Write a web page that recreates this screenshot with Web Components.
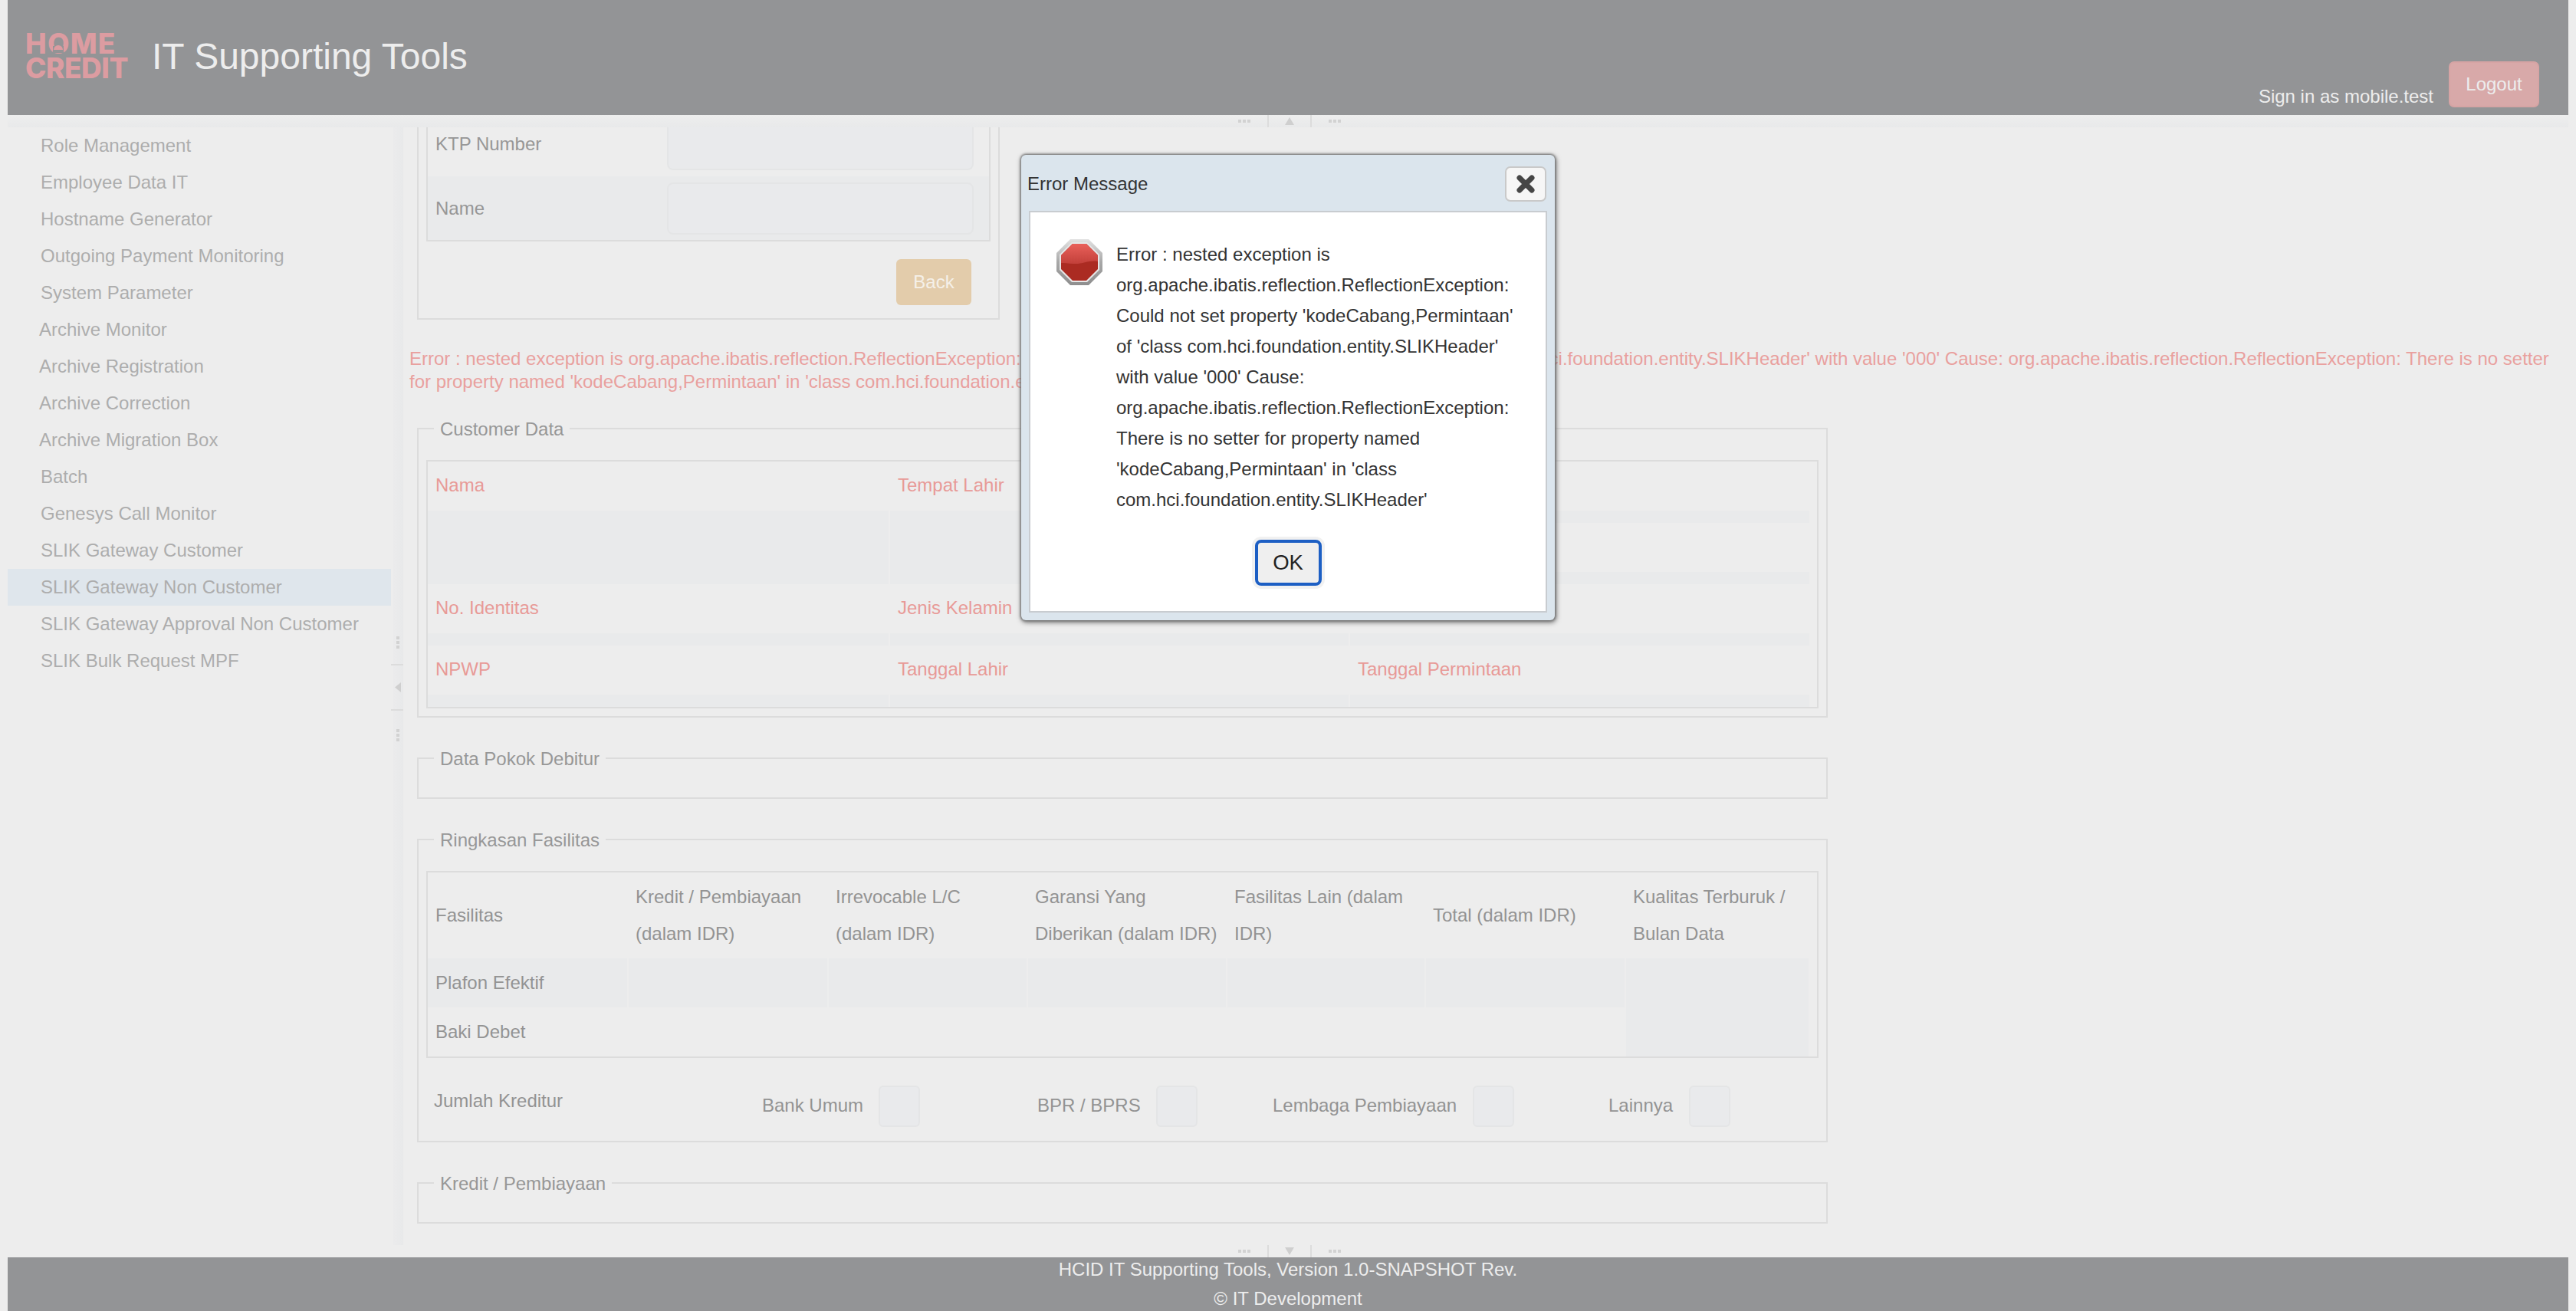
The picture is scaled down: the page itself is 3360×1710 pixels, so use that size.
<!DOCTYPE html>
<html>
<head>
<meta charset="utf-8">
<title>IT Supporting Tools</title>
<style>
    html, body { margin: 0; height: 100%; overflow: hidden; background: #ededed; }
    body { font: 24px "Liberation Sans", Arial, sans-serif; color: #979797; }
</style>
</head>
<body>
<it-app>
    <it-header slot="header" user="mobile.test"></it-header>
    <it-resizer slot="north" dir="up"></it-resizer>
    <it-sidebar slot="side">
        <it-nav-item>Role Management</it-nav-item>
        <it-nav-item>Employee Data IT</it-nav-item>
        <it-nav-item>Hostname Generator</it-nav-item>
        <it-nav-item>Outgoing Payment Monitoring</it-nav-item>
        <it-nav-item>System Parameter</it-nav-item>
        <it-nav-item outdent>Archive Monitor</it-nav-item>
        <it-nav-item outdent>Archive Registration</it-nav-item>
        <it-nav-item outdent>Archive Correction</it-nav-item>
        <it-nav-item outdent>Archive Migration Box</it-nav-item>
        <it-nav-item>Batch</it-nav-item>
        <it-nav-item>Genesys Call Monitor</it-nav-item>
        <it-nav-item>SLIK Gateway Customer</it-nav-item>
        <it-nav-item active>SLIK Gateway Non Customer</it-nav-item>
        <it-nav-item>SLIK Gateway Approval Non Customer</it-nav-item>
        <it-nav-item>SLIK Bulk Request MPF</it-nav-item>
    </it-sidebar>
    <it-resizer slot="west" dir="left"></it-resizer>
    <it-main slot="main">
        <it-search-form></it-search-form>
        <it-error-text>Error : nested exception is org.apache.ibatis.reflection.ReflectionException: Could not set property 'kodeCabang,Permintaan' of 'class com.hci.foundation.entity.SLIKHeader' with value '000' Cause: org.apache.ibatis.reflection.ReflectionException: There is no setter for property named 'kodeCabang,Permintaan' in 'class com.hci.foundation.entity.SLIKHeader'</it-error-text>
        <it-fieldset legend="Customer Data" style="margin-top:30px">
            <it-customer-table></it-customer-table>
        </it-fieldset>
        <it-fieldset legend="Data Pokok Debitur"></it-fieldset>
        <it-fieldset legend="Ringkasan Fasilitas">
            <it-facility-table></it-facility-table>
            <it-creditor-row></it-creditor-row>
        </it-fieldset>
        <it-fieldset legend="Kredit / Pembiayaan"></it-fieldset>
    </it-main>
    <it-resizer slot="south" dir="down"></it-resizer>
    <it-footer slot="footer"></it-footer>
</it-app>
<it-dialog heading="Error Message">Error : nested exception is org.apache.ibatis.reflection.ReflectionException: Could not set property 'kodeCabang,Permintaan' of 'class com.hci.foundation.entity.SLIKHeader' with value '000' Cause: org.apache.ibatis.reflection.ReflectionException: There is no setter for property named 'kodeCabang,Permintaan' in 'class com.hci.foundation.entity.SLIKHeader'</it-dialog>

<script>
'use strict';

class ItApp extends HTMLElement {
    connectedCallback() {
        this.attachShadow({ mode: 'open' }).innerHTML = `<style>
    :host {
        display: grid;
        height: 1710px;
        box-sizing: border-box;
        padding: 0 10px;
        grid-template-rows: 150px 16px 1458px 16px 70px;
        grid-template-columns: 500px 16px 1fr;
        overflow: hidden;
    }
    ::slotted([slot=header]), ::slotted([slot=north]), ::slotted([slot=south]), ::slotted([slot=footer]) {
        grid-column: 1 / -1;
    }
</style>
<slot name="header"></slot>
<slot name="north"></slot>
<slot name="side"></slot>
<slot name="west"></slot>
<slot name="main"></slot>
<slot name="south"></slot>
<slot name="footer"></slot>`;
    }
}

class ItHeader extends HTMLElement {
    connectedCallback() {
        const user = this.getAttribute('user');
        this.attachShadow({ mode: 'open' }).innerHTML = `<style>
    :host { display: flex; background: #939496; color: #ededed; position: relative; }
    .logo {
        margin: 41px 0 0 23px;
        width: 165px;
        font: 800 37px/32px Inter, "Liberation Sans", sans-serif;
        color: #dc9ca1;
    }
    .logo div { white-space: nowrap; height: 32px; }
    .home { letter-spacing: 1.2px; position: relative; }
    .credit { letter-spacing: -0.5px; }
    .notch {
        position: absolute;
        left: 36px;
        top: 19px;
        width: 14px;
        height: 9px;
        background: #939496;
    }
    .smile {
        position: absolute;
        left: 37px;
        top: 18px;
        width: 12px;
        height: 6px;
        border-radius: 6px 6px 0 0;
        background: #dc9ca1;
    }
    h1 { margin: 0; font: 48px/147px "Liberation Sans", Arial, sans-serif; flex: 1; }
    .user { align-self: flex-end; line-height: 28px; margin: 0 20px 10px 0; }
    button {
        align-self: flex-end;
        width: 118px;
        height: 60px;
        margin: 0 38px 10px 0;
        border: 2px solid #d6a4a4;
        border-radius: 7px;
        background: #d8a9a9;
        color: #ededed;
        font: inherit;
        padding: 0;
    }
</style>
<div class="logo">
    <div class="home">HOME<i class="notch"></i><i class="smile"></i></div>
    <div class="credit">CREDIT</div>
</div>
<h1>IT Supporting Tools</h1>
<span class="user">Sign in as ${user}</span>
<button>Logout</button>`;
    }
}

class ItResizer extends HTMLElement {
    connectedCallback() {
        const dir = this.getAttribute('dir');
        const vertical = dir === 'left';
        const arrows = {
            up: '<polygon points="0,10 12,10 6,0"/>',
            down: '<polygon points="0,0 12,0 6,10"/>',
            left: '<polygon points="8,0 8,13 0,6.5"/>'
        };
        const box = dir === 'left' ? '0 0 8 13' : '0 0 12 10';
        const size = dir === 'left' ? 'width="8" height="13"' : 'width="12" height="10"';
        this.attachShadow({ mode: 'open' }).innerHTML = `<style>
    :host {
        display: flex;
        align-items: center;
        justify-content: center;
        flex-direction: ${vertical ? 'column' : 'row'};
        background: ${dir === 'up' ? 'linear-gradient(#eeeeee, #e8e9ea)' : dir === 'left' ? 'linear-gradient(90deg, transparent 3px, #ebebec 3px, #e8e9ea)' : '#ededed'};
    }
    .dots { display: flex; gap: 2px; flex-direction: ${vertical ? 'column' : 'row'}; padding: ${vertical ? '0 0 0 2px' : '0'}; }
    .dots i { width: 4px; height: 4px; background: #d2d2d2; }
    .line { background: #dcdcdc; ${vertical ? 'height: 2px; align-self: stretch;' : 'width: 2px; align-self: stretch;'} }
    svg { fill: #cfcfcf; display: block; }
    ${vertical
        ? '.g1 { margin-bottom: 20px; } .g2 { margin-bottom: 22px; } .g3 { margin-bottom: 22px; } .g4 { margin-bottom: 24px; } svg { margin-left: 1px; } :host { padding-top: 6px; }'
        : '.g1 { margin-right: 22px; } .g2 { margin-right: 21px; } .g3 { margin-right: 21px; } .g4 { margin-right: 22px; } :host { padding-left: 4px; }'}
</style>
<div class="dots g1"><i></i><i></i><i></i></div>
<div class="line g2"></div>
<svg class="g3" ${size} viewBox="${box}">${arrows[dir]}</svg>
<div class="line g4"></div>
<div class="dots"><i></i><i></i><i></i></div>`;
    }
}

class ItSidebar extends HTMLElement {
    connectedCallback() {
        this.attachShadow({ mode: 'open' }).innerHTML = `<style>
    :host { display: block; color: #adadad; overflow: hidden; }
</style>
<slot></slot>`;
    }
}

class ItNavItem extends HTMLElement {
    connectedCallback() {
        this.attachShadow({ mode: 'open' }).innerHTML = `<style>
    :host { display: block; height: 48px; line-height: 48px; padding-left: 43px; white-space: nowrap; }
    :host([outdent]) { padding-left: 41px; }
    :host([active]) { background: #dfe6ec; }
</style>
<slot></slot>`;
    }
}

class ItMain extends HTMLElement {
    connectedCallback() {
        this.attachShadow({ mode: 'open' }).innerHTML = `<style>
    :host { display: flex; flex-direction: column; padding-left: 8px; overflow: hidden; }
</style>
<slot></slot>`;
    }
}

class ItSearchForm extends HTMLElement {
    connectedCallback() {
        this.attachShadow({ mode: 'open' }).innerHTML = `<style>
    :host {
        display: block;
        box-sizing: border-box;
        width: 760px;
        margin-left: 10px;
        flex: none;
        height: 251px;
        padding: 0 10px;
        border: 2px solid #dcdcdc;
        border-top: 0;
    }
    .box {
        border: 2px solid #dcdcdc;
        border-top: 0;
        width: 736px;
        box-sizing: border-box;
        height: 149px;
    }
    .row { display: grid; grid-template-columns: 312px 400px; }
    .row span { padding-left: 10px; }
    .r1 { height: 64px; }
    .r1 span { line-height: 44px; }
    .r2 { height: 83px; background: #e9eaeb; }
    .r2 span { line-height: 84px; }
    .input { box-sizing: border-box; background: #e9eaec; border: 2px solid #e4e5e6; border-radius: 8px; }
    .r1 .input { height: 56px; border-top: 0; border-radius: 0 0 8px 8px; }
    .r2 .input { height: 68px; margin-top: 8px; }
    .back { display: flex; justify-content: flex-end; padding: 23px 25px 0 0; }
    button {
        width: 98px;
        height: 60px;
        border: 0;
        border-radius: 6px;
        background: #e3ccab;
        color: #f5f0e8;
        font: inherit;
        padding: 0;
    }
</style>
<div class="box">
    <div class="row r1"><span>KTP Number</span><div class="input"></div></div>
    <div class="row r2"><span>Name</span><div class="input"></div></div>
</div>
<div class="back"><button>Back</button></div>`;
    }
}

class ItErrorText extends HTMLElement {
    connectedCallback() {
        this.attachShadow({ mode: 'open' }).innerHTML = `<style>
    :host { display: block; flex: none; margin-top: 36px; line-height: 30px; color: #e9a09e; }
</style>
<slot></slot>`;
    }
}

class ItFieldset extends HTMLElement {
    connectedCallback() {
        this.attachShadow({ mode: 'open' }).innerHTML = `<style>
    :host { display: block; flex: none; width: 1840px; margin: 37px 0 0 10px; }
    fieldset {
        margin: 0;
        min-width: 0;
        box-sizing: border-box;
        width: 100%;
        padding: 25px 10px 10px;
        border: 2px solid #dcdcdc;
    }
    legend { margin-left: 10px; padding: 2px 8px 0; line-height: 30px; }
</style>
<fieldset><legend>${this.getAttribute('legend')}</legend><slot></slot></fieldset>`;
    }
}

class ItCell extends HTMLElement {
    connectedCallback() {
        this.attachShadow({ mode: 'open' }).innerHTML = `<style>
    :host { display: block; height: 64px; line-height: 62px; color: #e89a97; padding-left: 10px; box-sizing: border-box; }
    :host([band]) { height: 16px; background: #e9eaeb; }
    :host([tall]) { height: 96px; }
</style>
<slot></slot>`;
    }
}

class ItCustomerTable extends HTMLElement {
    connectedCallback() {
        this.attachShadow({ mode: 'open' }).innerHTML = `<style>
    :host {
        display: grid;
        grid-template-columns: 601px 598px 599px;
        gap: 2px;
        box-sizing: border-box;
        height: 324px;
        border: 2px solid #dcdcdc;
    }
</style>
<div>
    <it-cell>Nama</it-cell><it-cell band tall></it-cell>
    <it-cell>No. Identitas</it-cell><it-cell band></it-cell>
    <it-cell>NPWP</it-cell><it-cell band></it-cell>
</div>
<div>
    <it-cell>Tempat Lahir</it-cell><it-cell band tall></it-cell>
    <it-cell>Jenis Kelamin</it-cell><it-cell band></it-cell>
    <it-cell>Tanggal Lahir</it-cell><it-cell band></it-cell>
</div>
<div>
    <it-cell></it-cell><it-cell band></it-cell>
    <it-cell></it-cell><it-cell band></it-cell>
    <it-cell></it-cell><it-cell band></it-cell>
    <it-cell>Tanggal Permintaan</it-cell><it-cell band></it-cell>
</div>`;
    }
}

class ItFacilityTable extends HTMLElement {
    connectedCallback() {
        const heads = [
            'Fasilitas',
            'Kredit / Pembiayaan<br>(dalam IDR)',
            'Irrevocable L/C<br>(dalam IDR)',
            'Garansi Yang<br>Diberikan (dalam IDR)',
            'Fasilitas Lain (dalam<br>IDR)',
            'Total (dalam IDR)',
            'Kualitas Terburuk /<br>Bulan Data'
        ];
        const blanks = '<div class="c band"></div>'.repeat(5);
        this.attachShadow({ mode: 'open' }).innerHTML = `<style>
    :host {
        display: grid;
        box-sizing: border-box;
        height: 244px;
        padding-right: 12px;
        border: 2px solid #dcdcdc;
        grid-template-columns: 260px 259px 258px 258px 257px 259px 238px;
        grid-template-rows: 112px 64px 64px;
        column-gap: 2px;
        color: #939393;
    }
    .c { padding-left: 9px; }
    .first { padding-left: 10px; }
    .h { display: flex; align-items: center; line-height: 48px; padding-top: 0; }
    .band { background: #e9eaeb; }
    .t { line-height: 64px; }
    .last { grid-row: 2 / 4; grid-column: 7; }
    .baki { grid-row: 3; grid-column: 1; }
</style>
${heads.map((h, i) => `<div class="c h ${i === 0 ? 'first' : ''}"><span>${h}</span></div>`).join('')}
<div class="c first t band">Plafon Efektif</div>
${blanks}
<div class="c band last"></div>
<div class="c first t baki">Baki Debet</div>`;
    }
}

class ItCreditorRow extends HTMLElement {
    connectedCallback() {
        const labels = [
            ['Bank Umum', 152, 153],
            ['BPR / BPRS', 155, 98],
            ['Lembaga Pembiayaan', 261, 123],
            ['Lainnya', 105, 0]
        ];
        const cols = labels.map((l) => `${l[1]}px 54px ${l[2]}px`).join(' ');
        this.attachShadow({ mode: 'open' }).innerHTML = `<style>
    :host {
        display: grid;
        grid-template-columns: 428px ${cols};
        height: 54px;
        margin: 36px 0 8px;
        padding-left: 10px;
        color: #939393;
    }
    .title { line-height: 40px; white-space: nowrap; }
    .label { line-height: 52px; white-space: nowrap; }
    .input { box-sizing: border-box; height: 54px; background: #e9eaec; border: 2px solid #e4e5e6; border-radius: 6px; }
</style>
<span class="title">Jumlah Kreditur</span>
${labels.map((l) => `<span class="label">${l[0]}</span><div class="input"></div><span></span>`).join('')}`;
    }
}

class ItFooter extends HTMLElement {
    connectedCallback() {
        this.attachShadow({ mode: 'open' }).innerHTML = `<style>
    :host { display: block; background: #939496; color: #ededed; text-align: center; overflow: hidden; }
    div:first-of-type { line-height: 32px; }
    div:last-of-type { line-height: 44px; }
</style>
<div>HCID IT Supporting Tools, Version 1.0-SNAPSHOT Rev.</div>
<div>© IT Development</div>`;
    }
}

class ItDialog extends HTMLElement {
    connectedCallback() {
        this.attachShadow({ mode: 'open' }).innerHTML = `<style>
    :host {
        position: absolute;
        left: 1332px;
        top: 202px;
        width: 696px;
        height: 607px;
        box-sizing: border-box;
        padding: 0 10px 10px;
        background: #dbe5ed;
        border-radius: 6px;
        box-shadow: 0 0 3px 1px #6f6f6f, 1px 2px 6px 1px #777;
        color: #333333;
        display: flex;
        flex-direction: column;
    }
    .bar { height: 73px; flex: none; display: flex; align-items: center; justify-content: space-between; }
    .bar span { margin: 3px 0 0 -2px; }
    .close {
        width: 54px;
        height: 46px;
        margin: 3px 1px 0 0;
        box-sizing: border-box;
        border: 2px solid #c9c9c9;
        border-radius: 7px;
        background: #f6f6f6;
        padding: 0;
        display: flex;
        align-items: center;
        justify-content: center;
    }
    .body {
        flex: 1;
        box-sizing: border-box;
        background: #fff;
        border: 2px solid #c8ccd0;
        padding: 35px 0 0 34px;
    }
    .msg { display: flex; gap: 18px; }
    .text { width: 530px; line-height: 40px; }
    svg { display: block; flex: none; }
    .ok { display: flex; justify-content: center; margin: 32px 34px 0 0; }
    button.primary {
        width: 87px;
        height: 60px;
        box-sizing: border-box;
        border: 4px solid #1d5fc4;
        border-radius: 8px;
        background: #efefef;
        box-shadow: 0 0 0 4px #f1f1f1;
        color: #222;
        font: 27.5px "Liberation Sans", Arial, sans-serif;
        padding: 0;
    }
</style>
<div class="bar">
    <span>${this.getAttribute('heading')}</span>
    <button class="close">
        <svg width="24" height="24" viewBox="0 0 24 24"><path d="M4 4L20 20M20 4L4 20" stroke="#464646" stroke-width="7" stroke-linecap="round"/></svg>
    </button>
</div>
<div class="body">
    <div class="msg">
        <svg width="60" height="60" viewBox="0 0 60 60">
            <defs>
                <linearGradient id="rim" x1="0" y1="0" x2="0" y2="1">
                    <stop offset="0" stop-color="#e2e2e2"/><stop offset="0.5" stop-color="#a8a8a8"/><stop offset="1" stop-color="#8e8e8e"/>
                </linearGradient>
                <linearGradient id="top" x1="0" y1="0" x2="0" y2="1">
                    <stop offset="0" stop-color="#e9605a"/><stop offset="1" stop-color="#c2403a"/>
                </linearGradient>
            </defs>
            <polygon points="18,0 42,0 60,18 60,42 42,60 18,60 0,42 0,18" fill="url(#rim)"/>
            <polygon points="20,4 40,4 56,20 56,40 40,56 20,56 4,40 4,20" fill="#e6e6e6"/>
            <polygon points="21,6 39,6 54,21 54,39 39,54 21,54 6,39 6,21" fill="#ab2b22"/>
            <path d="M21 6H39L54 21V29C42 27 34 33 22 32C15 31.500 10 31 6 31V21Z" fill="url(#top)"/>
        </svg>
        <div class="text"><slot></slot></div>
    </div>
    <div class="ok"><button class="primary">OK</button></div>
</div>`;
    }
}

customElements.define('it-app', ItApp);
customElements.define('it-header', ItHeader);
customElements.define('it-resizer', ItResizer);
customElements.define('it-sidebar', ItSidebar);
customElements.define('it-nav-item', ItNavItem);
customElements.define('it-main', ItMain);
customElements.define('it-search-form', ItSearchForm);
customElements.define('it-error-text', ItErrorText);
customElements.define('it-fieldset', ItFieldset);
customElements.define('it-cell', ItCell);
customElements.define('it-customer-table', ItCustomerTable);
customElements.define('it-facility-table', ItFacilityTable);
customElements.define('it-creditor-row', ItCreditorRow);
customElements.define('it-footer', ItFooter);
customElements.define('it-dialog', ItDialog);
</script>
</body>
</html>
